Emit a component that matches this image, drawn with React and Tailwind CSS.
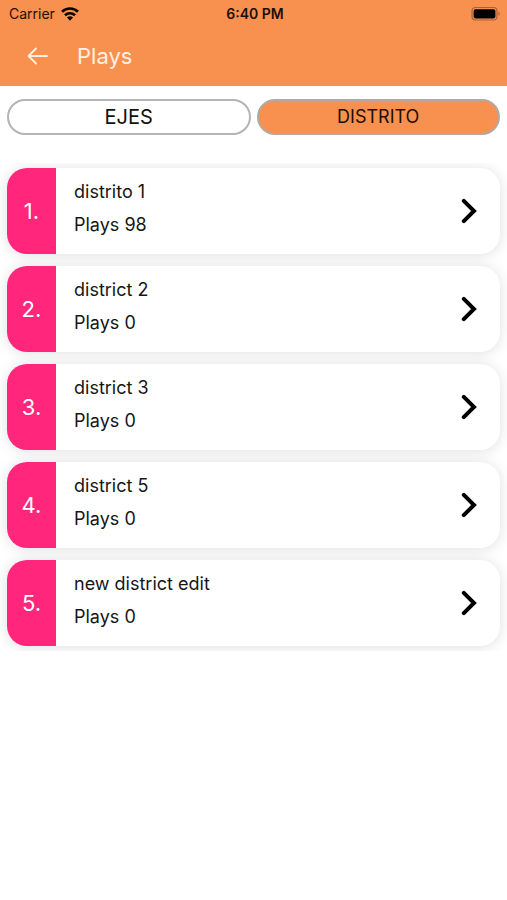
import React from "react";

const districts = [
  { name: "distrito 1", plays: 98 },
  { name: "district 2", plays: 0 },
  { name: "district 3", plays: 0 },
  { name: "district 5", plays: 0 },
  { name: "new district edit", plays: 0 },
];

function StatusBar() {
  return (
    <div className="grid h-7 grid-cols-3 items-center pr-[6px] pl-[9px] text-sm leading-7 text-[#1d0f05]">
      <div className="flex items-center gap-[6px]">
        <span>Carrier</span>
        <svg viewBox="0 0 18 14" className="h-[14px] w-[18px]" aria-hidden="true">
          <g fill="none" stroke="#0c0602" strokeWidth="2.6">
            <path d="M1 4.8a11.4 11.4 0 0 1 16 0" />
            <path d="M4 8.3a7.2 7.2 0 0 1 10 0" />
          </g>
          <path d="M6 10.6a4.3 4.3 0 0 1 6 0L9 13.8z" fill="#0c0602" />
        </svg>
      </div>
      <span className="text-center font-semibold">6:40 PM</span>
      <svg viewBox="0 0 30 14" className="h-[14px] w-[30px] justify-self-end" aria-hidden="true">
        <rect x="1" y="0.5" width="25" height="12.5" rx="3.5" fill="none" stroke="#a96238" strokeWidth="1.2" />
        <rect x="2.6" y="2.2" width="21.8" height="9.2" rx="1.8" fill="#000" />
        <path d="M27.5 4.7a2.4 2.4 0 0 1 0 4.2z" fill="#a96238" />
      </svg>
    </div>
  );
}

function DistrictRow({ index, name, plays }) {
  return (
    <li>
      <button
        type="button"
        className="flex h-[86px] w-full items-stretch overflow-hidden rounded-[20px] bg-white text-left shadow-[0_1px_14px_rgba(0,0,0,0.13)]"
      >
        <span className="flex w-[49px] shrink-0 items-center justify-center bg-[#ff267c] text-[22px] text-white">
          {index}.
        </span>
        <span className="flex flex-1 flex-col gap-[5px] pt-[10px] pl-[18px] text-lg text-[#161616]">
          <span>{name}</span>
          <span>Plays {plays}</span>
        </span>
        <svg viewBox="0 0 16 26" className="mr-[23px] h-[26px] w-4 self-center" aria-hidden="true">
          <path d="M2.8 2.8 13 13 2.8 23.2" fill="none" stroke="#000" strokeWidth="4" strokeLinecap="round" strokeLinejoin="miter" />
        </svg>
      </button>
    </li>
  );
}

export default function App() {
  return (
    <div className="min-h-screen bg-white font-['Inter',sans-serif]">
      <header className="bg-[#f89050]">
        <StatusBar />
        <div className="flex h-[58px] items-center gap-[29px] pb-[2px] pl-[27px]">
          <button type="button" aria-label="Back" className="h-5 w-[21px]">
            <svg viewBox="0 0 21 20" className="h-5 w-[21px]" aria-hidden="true">
              <path d="M20 10H1.5M9 2.5 1.5 10 9 17.5" fill="none" stroke="#fff0e2" strokeWidth="1.8" strokeLinecap="round" strokeLinejoin="round" />
            </svg>
          </button>
          <h1 className="text-[22px] text-[#fff0e2]">Plays</h1>
        </div>
      </header>
      <main>
        <div className="grid grid-cols-2 gap-[6px] px-[7px] pt-[13px] pb-7">
          <button type="button" className="h-9 rounded-full border-2 border-[#b4b4b4] bg-white text-xl text-[#111]">
            EJES
          </button>
          <button type="button" className="h-9 rounded-full border-2 border-[#b4a9a2] bg-[#f89050] text-lg text-[#1d0f05]">
            DISTRITO
          </button>
        </div>
        <ul className="flex flex-col gap-3 overflow-hidden px-[7px] pt-[5px] pb-[5px]">
          {districts.map((d, i) => (
            <DistrictRow key={d.name} index={i + 1} name={d.name} plays={d.plays} />
          ))}
        </ul>
      </main>
    </div>
  );
}
